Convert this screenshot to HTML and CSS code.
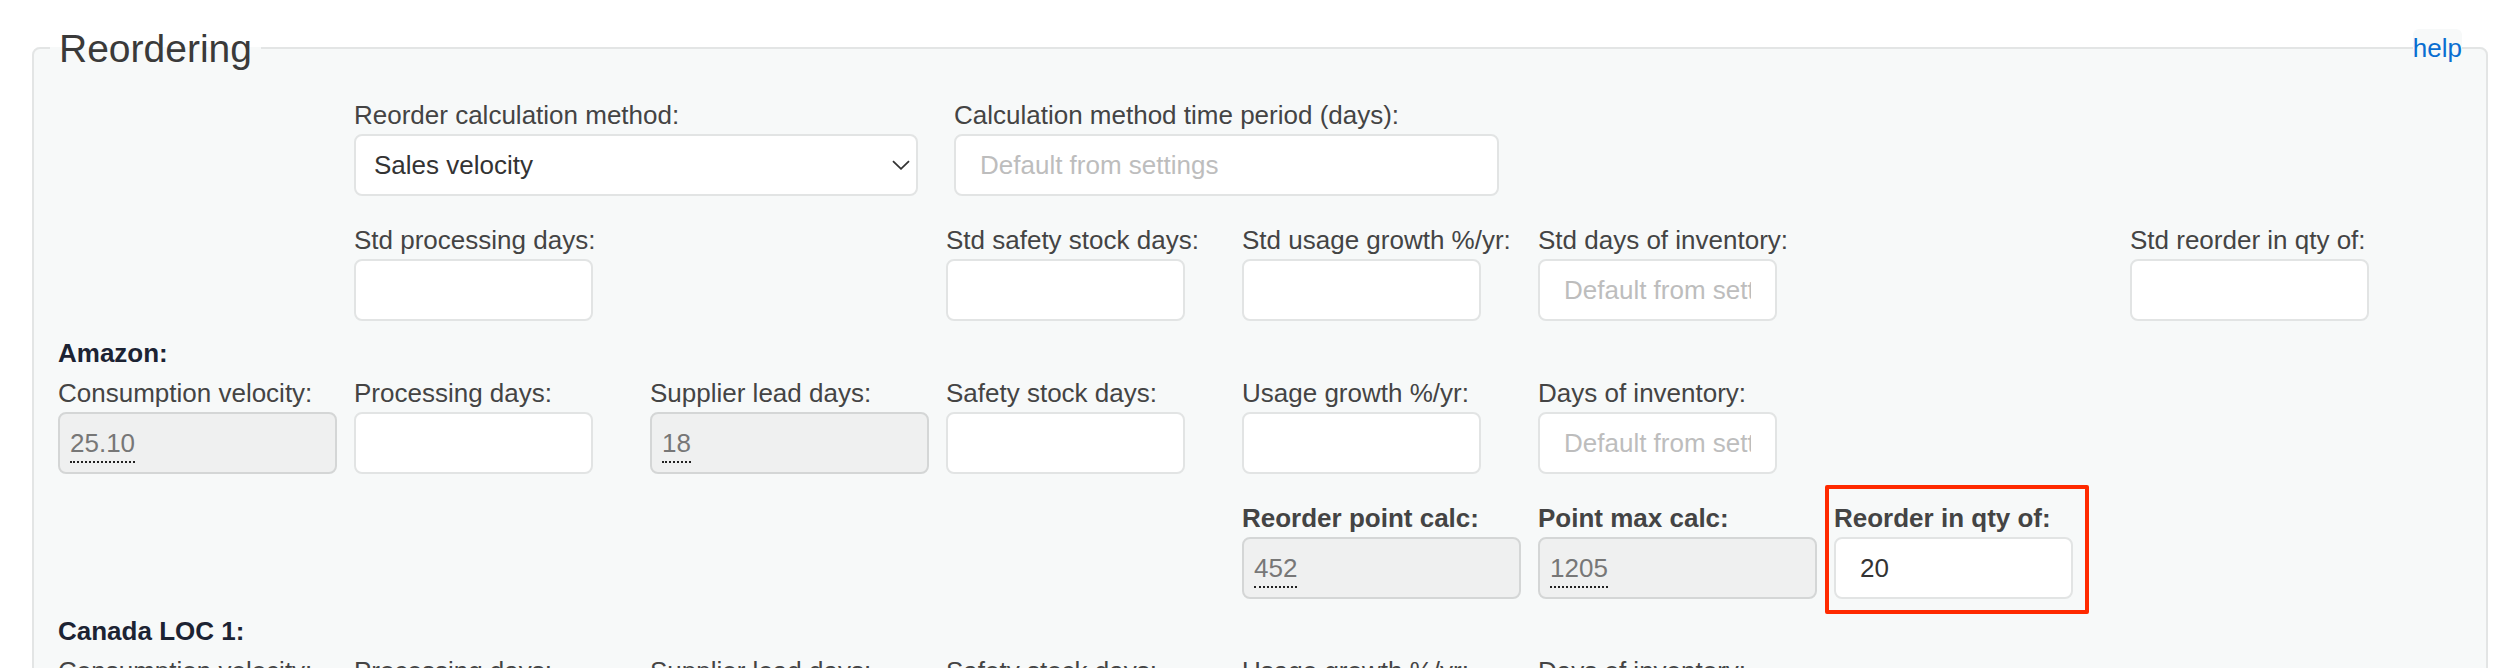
FILE: index.html
```html
<!DOCTYPE html>
<html lang="en">
<head>
    <meta charset="utf-8">
    <meta name="viewport" content="width=device-width, initial-scale=1">
    <title>Reordering</title>
    <link rel="stylesheet" href="styles.css">
</head>
<body>
    <fieldset class="panel">
        <legend>Reordering</legend>
        <a class="help" href="#">help</a>

        <div class="method-row">
            <div class="field">
                <label for="calc-method">Reorder calculation method:</label>
                <div class="select-wrap">
                    <select id="calc-method" class="form-control method-select">
                        <option>Sales velocity</option>
                        <option>Usage velocity</option>
                    </select>
                    <svg class="chevron" width="18" height="10" viewBox="0 0 18 10"><path d="M1 1.2l8 7.6 8-7.6" fill="none" stroke="#333" stroke-width="1.8"/></svg>
                </div>
            </div>
            <div class="field">
                <label for="calc-period">Calculation method time period (days):</label>
                <input id="calc-period" class="form-control period-input" type="text" placeholder="Default from settings">
            </div>
        </div>

        <div class="grid">
            <div class="field col-2">
                <label>Std processing days:</label>
                <input class="form-control" type="text">
            </div>
            <div class="field col-4">
                <label>Std safety stock days:</label>
                <input class="form-control" type="text">
            </div>
            <div class="field">
                <label>Std usage growth %/yr:</label>
                <input class="form-control" type="text">
            </div>
            <div class="field">
                <label>Std days of inventory:</label>
                <input class="form-control" type="text" placeholder="Default from settings">
            </div>
            <div class="field col-8">
                <label>Std reorder in qty of:</label>
                <input class="form-control" type="text">
            </div>
        </div>

        <h4 class="group-title">Amazon:</h4>
        <div class="grid">
            <div class="field">
                <label>Consumption velocity:</label>
                <div class="form-control readonly"><span class="calc" title="Average daily consumption">25.10</span></div>
            </div>
            <div class="field">
                <label>Processing days:</label>
                <input class="form-control" type="text">
            </div>
            <div class="field">
                <label>Supplier lead days:</label>
                <div class="form-control readonly"><span class="calc" title="From supplier">18</span></div>
            </div>
            <div class="field">
                <label>Safety stock days:</label>
                <input class="form-control" type="text">
            </div>
            <div class="field">
                <label>Usage growth %/yr:</label>
                <input class="form-control" type="text">
            </div>
            <div class="field">
                <label>Days of inventory:</label>
                <input class="form-control" type="text" placeholder="Default from settings">
            </div>
        </div>
        <div class="grid">
            <div class="field col-5">
                <label class="strong">Reorder point calc:</label>
                <div class="form-control readonly"><span class="calc" title="Calculated reorder point">452</span></div>
            </div>
            <div class="field">
                <label class="strong">Point max calc:</label>
                <div class="form-control readonly"><span class="calc" title="Calculated point max">1205</span></div>
            </div>
            <div class="field marked">
                <label class="strong">Reorder in qty of:</label>
                <input class="form-control" type="text" value="20">
                <span class="highlight"></span>
            </div>
        </div>

        <h4 class="group-title">Canada LOC 1:</h4>
        <div class="grid">
            <div class="field">
                <label>Consumption velocity:</label>
                <div class="form-control readonly"><span class="calc">0.00</span></div>
            </div>
            <div class="field">
                <label>Processing days:</label>
                <input class="form-control" type="text">
            </div>
            <div class="field">
                <label>Supplier lead days:</label>
                <div class="form-control readonly"><span class="calc">18</span></div>
            </div>
            <div class="field">
                <label>Safety stock days:</label>
                <input class="form-control" type="text">
            </div>
            <div class="field">
                <label>Usage growth %/yr:</label>
                <input class="form-control" type="text">
            </div>
            <div class="field">
                <label>Days of inventory:</label>
                <input class="form-control" type="text" placeholder="Default from settings">
            </div>
        </div>
    </fieldset>
</body>
</html>
```

FILE: styles.css
```css
html, body {
    overflow: hidden;
}
body {
    margin: 0;
    padding: 24px 26px 0 32px;
    font-family: "Liberation Sans", Arial, sans-serif;
    font-size: 26px;
    color: #444;
    background: #fff;
}
.panel {
    position: relative;
    margin: 0;
    padding: 25px 24px 40px;
    border: 2px solid #e3e5e5;
    border-radius: 8px;
    background: #f7f9f9;
}
.panel legend {
    margin-left: -8px;
    padding: 3px 9px 0;
    font-size: 39px;
    line-height: 44px;
    color: #3a3a3a;
}
.help {
    position: absolute;
    top: -42px;
    right: 24px;
    line-height: 38px;
    border-radius: 6px;
    background: #f7f9f9;
    color: #0a6ed1;
    text-decoration: none;
}
.help:hover {
    text-decoration: underline;
}
label {
    display: block;
    line-height: 38px;
    white-space: nowrap;
}
label.strong {
    font-weight: bold;
}
.method-row {
    display: flex;
    gap: 36px;
    padding-left: 296px;
}
.grid {
    display: grid;
    grid-template-columns: repeat(8, 279px);
    column-gap: 17px;
    margin-top: 25px;
}
.col-2 { grid-column: 2; }
.col-4 { grid-column: 4; }
.col-5 { grid-column: 5; }
.col-8 { grid-column: 8; }
.group-title {
    margin: 13px 0 -23px;
    font-size: 26px;
    line-height: 38px;
    color: #1c2333;
}
.form-control {
    display: block;
    box-sizing: border-box;
    width: 239px;
    height: 62px;
    margin: 0;
    padding: 0 24px;
    border: 2px solid #e2e4e4;
    border-radius: 8px;
    background: #fff;
    font-family: inherit;
    font-size: 26px;
    line-height: 58px;
    color: #333;
    outline: none;
}
.form-control::placeholder {
    color: #bdbdbd;
}
.select-wrap {
    position: relative;
}
.method-select {
    width: 564px;
    padding-left: 18px;
    appearance: none;
    -webkit-appearance: none;
}
.chevron {
    position: absolute;
    top: 26px;
    left: 538px;
    pointer-events: none;
}
.period-input {
    width: 545px;
}
.readonly {
    width: 279px;
    padding: 0 10px;
    border-color: #d4d6d6;
    background: #eff0f0;
    color: #777;
}
.calc {
    padding-bottom: 3px;
    border-bottom: 2px dotted #222;
}
.marked {
    position: relative;
}
.highlight {
    position: absolute;
    top: -14px;
    left: -9px;
    box-sizing: border-box;
    width: 264px;
    height: 129px;
    border: 4px solid #ff2a00;
    border-radius: 2px;
    pointer-events: none;
}
```
